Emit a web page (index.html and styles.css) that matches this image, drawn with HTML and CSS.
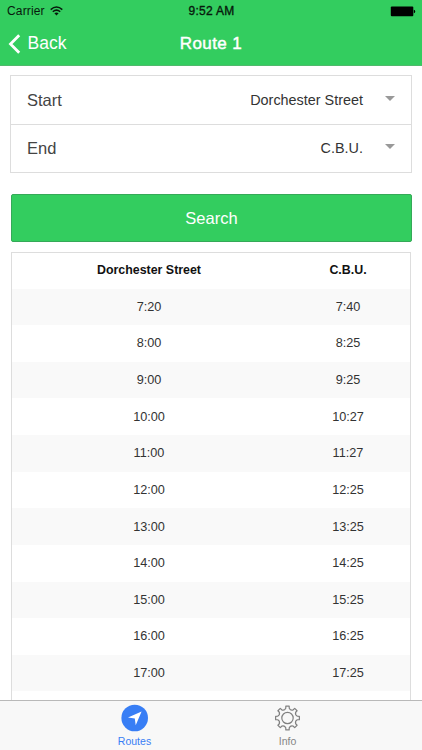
FILE: index.html
```html
<!DOCTYPE html>
<html lang="en">
<head>
<meta charset="utf-8">
<title>Route 1</title>
<link rel="stylesheet" href="styles.css">
</head>
<body>
<header class="header">
  <div class="status">
    <div class="carrier"><span>Carrier</span>
      <svg class="wifi" width="13" height="10" viewBox="0 0 13 10"><g fill="none" stroke="#07190c" stroke-width="1.5"><path d="M.7 3.6Q6.5-1.6 12.3 3.6"/><path d="M2.8 5.8Q6.5 2.5 10.2 5.8"/></g><path d="M4.4 7.3Q6.5 5.6 8.6 7.3L6.5 9.5Z" fill="#07190c"/></svg>
    </div>
    <span class="clock">9:52 AM</span>
    <svg class="battery" width="26" height="11" viewBox="0 0 26 11"><rect x=".8" y=".5" width="22.5" height="9.8" rx="1" fill="#000"/><path d="M23.8 3.8Q25.2 4 25.2 5.5T23.8 7.2Z" fill="#000"/></svg>
  </div>
  <div class="nav">
    <div class="back"><svg width="13" height="20" viewBox="0 0 13 20"><path d="M11.2 1.2 2.5 10l8.7 8.8" fill="none" stroke="#fff" stroke-width="2.8"/></svg><span>Back</span></div>
    <h1 class="title">Route 1</h1>
    <span></span>
  </div>
</header>
<main class="content">
  <section class="list">
    <div class="field"><span class="label">Start</span><span class="value">Dorchester Street</span><i class="caret"></i></div>
    <div class="field"><span class="label">End</span><span class="value">C.B.U.</span><i class="caret"></i></div>
  </section>
  <button class="search"><span>Search</span></button>
  <section class="times">
    <div class="row head"><span>Dorchester Street</span><span>C.B.U.</span></div>
    <div class="row"><span>7:20</span><span>7:40</span></div>
    <div class="row"><span>8:00</span><span>8:25</span></div>
    <div class="row"><span>9:00</span><span>9:25</span></div>
    <div class="row"><span>10:00</span><span>10:27</span></div>
    <div class="row"><span>11:00</span><span>11:27</span></div>
    <div class="row"><span>12:00</span><span>12:25</span></div>
    <div class="row"><span>13:00</span><span>13:25</span></div>
    <div class="row"><span>14:00</span><span>14:25</span></div>
    <div class="row"><span>15:00</span><span>15:25</span></div>
    <div class="row"><span>16:00</span><span>16:25</span></div>
    <div class="row"><span>17:00</span><span>17:25</span></div>
  </section>
</main>
<nav class="tabs">
  <div class="tab active">
    <svg width="28" height="28" viewBox="0 0 28 28"><circle cx="13.7" cy="14" r="13.3" fill="#387ef5"/><path d="M20.6 7.6 14.7 21.2 13.8 14.5 7 13.6Z" fill="#fff"/></svg>
    <span>Routes</span>
  </div>
  <div class="tab">
    <svg width="28" height="28" viewBox="0 0 28 28" fill="none" stroke="#808080" stroke-width="1.2" stroke-linejoin="round"><circle cx="13.5" cy="14" r="5.7"/><path id="gear" transform="translate(-.5 0)"/></svg>
    <span>Info</span>
  </div>
</nav>
<script src="gear.js"></script>
</body>
</html>
```
FILE: gear.js
```js
// Outline of the eight-toothed settings gear.
const polar = (deg, r) => {
  const a = deg * Math.PI / 180;
  return (14 + r * Math.sin(a)).toFixed(2) + ' ' + (14 - r * Math.cos(a)).toFixed(2);
};
let outline = '';
for (let i = 0; i < 8; i++) {
  const a = i * 45;
  outline += (i ? 'L' : 'M') + polar(a - 8, 12) + 'L' + polar(a + 8, 12) +
    'L' + polar(a + 10, 10) + 'Q' + polar(a + 22.5, 7.9) + ' ' + polar(a + 35, 10);
}
document.getElementById('gear').setAttribute('d', outline + 'Z');
```
FILE: styles.css
```css
* { box-sizing: border-box; }
body {
  margin: 0;
  width: 422px;
  height: 750px;
  overflow: hidden;
  display: flex;
  flex-direction: column;
  background: #fff;
  color: #333;
  font-family: "Liberation Sans", Arial, sans-serif;
}
svg { display: block; flex: none; }
.header {
  height: 66px;
  flex: none;
  background: #33cd5f;
  border-bottom: 1px solid #50b96c;
}
.status {
  height: 22px;
  display: grid;
  grid-template-columns: 1fr auto 1fr;
  align-items: center;
  padding: 0 6px 0 7px;
  color: #07190c;
  font-size: 12px;
  letter-spacing: .15px;
}
.carrier { display: flex; align-items: center; gap: 5px; }
.clock { -webkit-text-stroke: .35px #07190c; letter-spacing: .3px; }
.battery { justify-self: end; }
.nav {
  height: 43px;
  display: grid;
  grid-template-columns: 1fr auto 1fr;
  align-items: center;
  padding: 0 8px;
  color: #fff;
}
.back { display: flex; align-items: center; gap: 6.5px; font-size: 17.5px; }
.title {
  margin: 0;
  font-size: 17px;
  font-weight: normal;
  letter-spacing: .4px;
  -webkit-text-stroke: .45px #fff;
}
.content { flex: 1; min-height: 0; overflow: hidden; padding: 9px 10px 0; }
.list { height: 98px; border: 1px solid #ddd; display: flex; flex-direction: column; }
.field { flex: 1; display: flex; align-items: center; padding: 0 16px; }
.field + .field { border-top: 1px solid #ddd; }
.label { flex: 1; font-size: 16.5px; color: #444; padding-top: 1px; }
.value { font-size: 14.4px; color: #333; }
.caret {
  margin: -3px 0 0 22px;
  border: 5px solid transparent;
  border-top-color: #999;
  border-bottom: 0;
}
.search {
  display: block;
  width: 401px;
  height: 48px;
  margin: 21px 0 0 1px;
  padding: 0;
  border: 1px solid #35a958;
  border-radius: 2px;
  background: #33cd5f;
  color: #fff;
  font: 16.5px "Liberation Sans", Arial, sans-serif;
}
.times { margin: 10px 0 0 1px; width: 400px; border: 1px solid #ddd; height: 480px; }
.row {
  height: 36.63px;
  display: grid;
  grid-template-columns: 274px 1fr;
  align-items: center;
  text-align: center;
  font-size: 12.7px;
}
.row:nth-child(even) { background: #f9f9f9; }
.head { font-weight: bold; color: #111; font-size: 12.4px; height: 35.5px; padding-bottom: 1px; }
.tabs {
  height: 50px;
  flex: none;
  display: flex;
  justify-content: center;
  border-top: 1px solid #b9b9b9;
  background: #f8f8f8;
}
.tab {
  width: 153px;
  display: flex;
  flex-direction: column;
  align-items: center;
  padding-top: 3px;
  font-size: 10.5px;
  line-height: 12px;
  gap: 3px;
  color: #858585;
}
.active { color: #387ef5; }
```
